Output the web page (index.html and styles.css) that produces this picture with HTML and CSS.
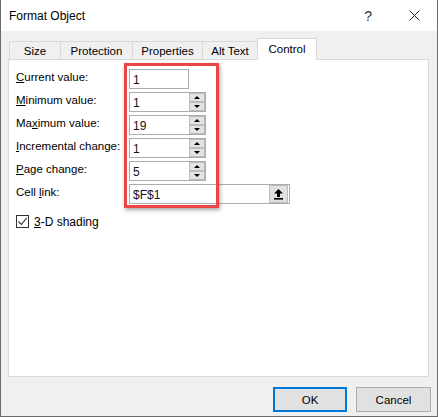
FILE: index.html
```html
<!DOCTYPE html>
<html>
<head>
<meta charset="utf-8">
<link rel="stylesheet" href="styles.css">
</head>
<body>
<div class="window">
  <div class="titlebar">
    <span class="title">Format Object</span>
    <span class="help">?</span>
    <svg class="close" width="11" height="11" viewBox="0 0 11 11"><path d="M0.5 0.5 L10.5 10.5 M10.5 0.5 L0.5 10.5" stroke="#222" stroke-width="1" fill="none"/></svg>
  </div>
  <div class="tabstrip">
    <div class="tab t-size">Size</div>
    <div class="tab t-prot">Protection</div>
    <div class="tab t-prop">Properties</div>
    <div class="tab t-alt">Alt Text</div>
    <div class="tab active t-ctrl">Control</div>
  </div>
  <div class="panel">
    <div class="form">
      <div class="label"><u>C</u>urrent value:</div>
      <div class="field w-cur"><span class="val">1</span></div>

      <div class="label"><u>M</u>inimum value:</div>
      <div class="field w-spin"><span class="val">1</span>
        <div class="spin"><div class="sbtn"><span class="up"></span></div><div class="sbtn"><span class="down"></span></div></div>
      </div>

      <div class="label">Ma<u>x</u>imum value:</div>
      <div class="field w-spin"><span class="val">19</span>
        <div class="spin"><div class="sbtn"><span class="up"></span></div><div class="sbtn"><span class="down"></span></div></div>
      </div>

      <div class="label"><u>I</u>ncremental change:</div>
      <div class="field w-spin"><span class="val">1</span>
        <div class="spin"><div class="sbtn"><span class="up"></span></div><div class="sbtn"><span class="down"></span></div></div>
      </div>

      <div class="label"><u>P</u>age change:</div>
      <div class="field w-spin"><span class="val">5</span>
        <div class="spin"><div class="sbtn"><span class="up"></span></div><div class="sbtn"><span class="down"></span></div></div>
      </div>

      <div class="label">Cell <u>l</u>ink:</div>
      <div class="field w-link"><span class="val">$F$1</span>
        <div class="refbtn">
          <svg width="11" height="12" viewBox="0 0 11 12"><path d="M5.5 1 L10 5.5 L7 5.5 L7 9 L4 9 L4 5.5 L1 5.5 Z" fill="#000"/><rect x="1" y="10" width="9" height="1.6" fill="#000"/></svg>
        </div>
      </div>
    </div>
    <div class="checkrow">
      <span class="checkbox">
        <svg width="11" height="11" viewBox="0 0 11 11"><path d="M1.5 5.5 L4.3 8.5 L9.8 1.8" stroke="#333" stroke-width="1.1" fill="none"/></svg>
      </span>
      <span class="checklabel"><u>3</u>-D shading</span>
    </div>
    <div class="highlight"></div>
  </div>
  <div class="footer">
    <button class="btn default">OK</button>
    <button class="btn">Cancel</button>
  </div>
</div>
</body>
</html>
```
FILE: styles.css
```css
html, body {
  margin: 0;
  padding: 0;
  background: #ffffff;
}

.window {
  width: 438px;
  height: 417px;
  box-sizing: border-box;
  border: 1px solid #6a6a6a;
  border-top: none;
  background: #f0f0f0;
  font-family: "Liberation Sans", Arial, sans-serif;
  font-size: 11.5px;
  color: #000;
  display: flex;
  flex-direction: column;
}

.titlebar {
  height: 31px;
  background: #ffffff;
  display: flex;
  align-items: center;
  padding-left: 8px;
  position: relative;
}

.title {
  font-size: 12px;
  flex: 1;
  padding-top: 1px;
}

.help {
  font-size: 14px;
  font-weight: normal;
  margin-right: 37px;
  color: #333;
}

.close {
  margin-right: 17px;
}

.tabstrip {
  margin-top: 7px;
  height: 21px;
  padding-left: 8px;
  display: flex;
  align-items: flex-end;
  position: relative;
  z-index: 2;
}

.tab {
  height: 18px;
  box-sizing: border-box;
  border: 1px solid #d9d9d9;
  border-bottom: none;
  background: #f0f0f0;
  display: flex;
  align-items: center;
  justify-content: center;
  margin-right: -1px;
  padding-top: 1px;
}

.t-size { width: 52px; }
.t-prot { width: 73px; }
.t-prop { width: 71px; }
.t-alt { width: 56px; }
.t-ctrl { width: 60px; }

.tab.active {
  height: 22px;
  background: #ffffff;
  margin-bottom: -1px;
  padding-top: 0;
  padding-bottom: 2px;
}

.panel {
  margin-left: 7px;
  width: 421px;
  height: 318px;
  box-sizing: border-box;
  border: 1px solid #d9d9d9;
  background: #ffffff;
  position: relative;
  padding: 9px 0 0 7px;
}

.form {
  display: grid;
  grid-template-columns: 113px auto;
  grid-auto-rows: 20px;
  row-gap: 3px;
}

.label {
  line-height: 16px;
  align-self: start;
  white-space: nowrap;
}

.field {
  box-sizing: border-box;
  height: 20px;
  border: 1px solid #acacac;
  background: #fff;
  display: flex;
  align-items: center;
  position: relative;
}

.w-cur { width: 60px; }
.w-spin { width: 77px; }
.w-link { width: 161px; }

.val {
  flex: 1;
  padding-left: 3px;
  font-size: 12px;
  color: #1a1020;
  padding-top: 1px;
}

.spin {
  width: 16px;
  height: 18px;
  display: flex;
  flex-direction: column;
  justify-content: space-between;
}

.sbtn {
  box-sizing: border-box;
  height: 9px;
  background: #e3e3e3;
  border: 1px solid #bcbcbc;
  display: flex;
  align-items: center;
  justify-content: center;
}

.up {
  width: 0;
  height: 0;
  border-left: 3px solid transparent;
  border-right: 3px solid transparent;
  border-bottom: 3px solid #000;
}

.down {
  width: 0;
  height: 0;
  border-left: 3px solid transparent;
  border-right: 3px solid transparent;
  border-top: 3px solid #000;
}

.refbtn {
  box-sizing: border-box;
  width: 19px;
  height: 18px;
  background: #e1e1e1;
  border: 1px solid #bdbdbd;
  margin-right: 1px;
  display: flex;
  align-items: center;
  justify-content: center;
}

.checkrow {
  display: flex;
  align-items: center;
  margin-top: 11px;
  height: 13px;
}

.checkbox {
  box-sizing: border-box;
  width: 13px;
  height: 13px;
  border: 1px solid #333;
  background: #fff;
  display: flex;
  align-items: center;
  justify-content: center;
}

.checklabel {
  margin-left: 5px;
  font-size: 12px;
}

.highlight {
  position: absolute;
  left: 115px;
  top: 3px;
  width: 95px;
  height: 145px;
  box-sizing: border-box;
  border: 3px solid #ec4545;
  box-shadow: 1px 2px 4px rgba(0, 0, 0, 0.35);
  pointer-events: none;
}

.footer {
  display: flex;
  justify-content: flex-end;
  gap: 9px;
  padding-right: 6px;
  margin-top: 10px;
}

.btn {
  box-sizing: border-box;
  width: 75px;
  height: 25px;
  background: #e1e1e1;
  border: 1px solid #adadad;
  font-family: "Liberation Sans", Arial, sans-serif;
  font-size: 11.5px;
  color: #000;
  padding: 0;
  margin: 0;
}

.btn.default {
  width: 74px;
  border: 2px solid #0078d7;
}
```
